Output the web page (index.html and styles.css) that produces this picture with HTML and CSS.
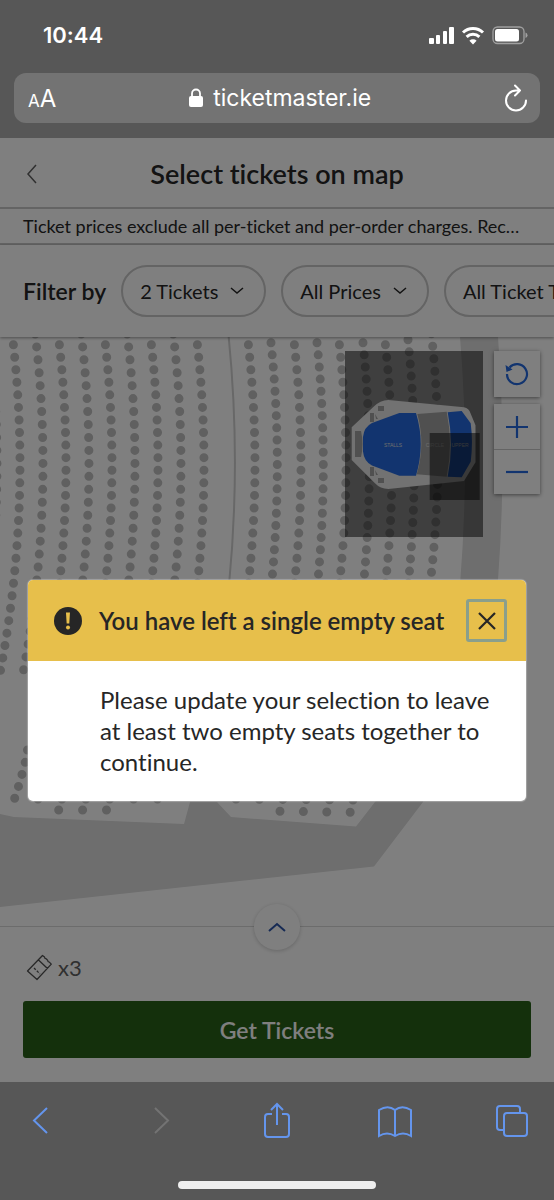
FILE: index.html
```html
<!DOCTYPE html>
<html lang="en">
<head>
    <meta charset="utf-8">
    <title>Select tickets on map</title>
    <meta name="viewport" content="width=device-width, initial-scale=1">
    <link rel="stylesheet" href="styles.css">
</head>
<body>
    <header class="browser-top">
        <div class="status-bar">
            <span class="clock">10:44</span>
            <svg class="status-icons" width="100" height="20" viewBox="428 25 100 20" aria-hidden="true">
                <g fill="#fff">
                    <rect x="429" y="38" width="5" height="6" rx="1"/>
                    <rect x="436" y="35" width="4" height="9" rx="1"/>
                    <rect x="443" y="31" width="4" height="13" rx="1"/>
                    <rect x="449" y="27" width="5" height="17" rx="1"/>
                    <path d="M473 44.500l-3.600-3.800a5.200 5.200 0 0 1 7.200 0z"/>
                    <rect x="495" y="29" width="24" height="12.500" rx="2.500"/>
                </g>
                <path d="M463 32.500a14.500 14.500 0 0 1 20 0M466.600 36.800a9.300 9.300 0 0 1 12.800 0" fill="none" stroke="#fff" stroke-width="3"/>
                <rect x="493" y="27" width="31" height="16.500" rx="4.500" fill="none" stroke="#a0a0a0" stroke-width="1.300"/>
                <path d="M525.500 32.500q2 .5 2 2.700t-2 2.700z" fill="#a0a0a0"/>
            </svg>
        </div>
        <div class="url-bar">
            <button class="plain text-size" aria-label="Text size"><small>A</small>A</button>
            <div class="url">
                <svg width="14" height="20" viewBox="0 0 14 20" aria-hidden="true">
                    <rect y="8" width="14" height="11" rx="2" fill="#fff"/>
                    <path d="M3 9V5.500a4 4 0 0 1 8 0V9" fill="none" stroke="#fff" stroke-width="1.800"/>
                </svg>
                <span>ticketmaster.ie</span>
            </div>
            <button class="plain" aria-label="Reload">
                <svg width="24" height="28" viewBox="0 0 24 28" fill="none" stroke="#fff" stroke-width="2" stroke-linecap="round" stroke-linejoin="round">
                    <path d="M16 6.500H12A10 10 0 1 0 22 16.500M11 1.500l5 5-5 5"/>
                </svg>
            </button>
        </div>
    </header>

    <main class="site">
        <div class="title-bar">
            <button class="plain back" aria-label="Back">
                <svg width="12" height="20" viewBox="0 0 12 20" fill="none" stroke="#606060" stroke-width="1.500"><path d="M10 1L2 10l8 9"/></svg>
            </button>
            <h1>Select tickets on map</h1>
        </div>
        <p class="notice">Ticket prices exclude all per-ticket and per-order charges. Recommended prices may vary.</p>
        <div class="filters">
            <span class="filters-label">Filter by</span>
            <button class="chip">2 Tickets
                <svg width="14" height="8" viewBox="0 0 14 8"><path d="M1 1l6 5 6-5"/></svg>
            </button>
            <button class="chip">All Prices
                <svg width="14" height="8" viewBox="0 0 14 8"><path d="M1 1l6 5 6-5"/></svg>
            </button>
            <button class="chip">All Ticket Types
                <svg width="14" height="8" viewBox="0 0 14 8"><path d="M1 1l6 5 6-5"/></svg>
            </button>
        </div>

        <div class="map">
            <svg class="seats" viewBox="0 337 554 589" preserveAspectRatio="xMinYMin slice" aria-hidden="true">
                <defs>
                    <!-- one seat row per path, the dots are round zero-length dashes -->
                    <path id="row-a" d="M13.400 344.700Q31.300 507.500 .5 670.500" stroke-dasharray="0 12.580"/>
                    <path id="row-b" d="M35.200 334Q55.300 502 23.400 671" stroke-dasharray="0 12.970"/>
                    <path id="row-c" d="M271 342.700Q283.600 464 271 590" stroke-dasharray="0 12.200"/>
                </defs>
                <path class="aisle" d="M460 337Q470 460 460 585L460 700 375 802 356 826.500 231 817 217 802 190 802 184 824 14 817 0 814V907L374 866.500 423 802 470 700 498 580Q507 460 498 337z"/>
                <path class="divider" d="M228.700 337Q241 461 229 585"/>
                <g class="rows">
                    <use href="#row-b" x="-46"/>
                    <use href="#row-a"/>
                    <use href="#row-b"/>
                    <use href="#row-a" x="46"/>
                    <use href="#row-b" x="46"/>
                    <use href="#row-a" x="92"/>
                    <use href="#row-b" x="92"/>
                    <use href="#row-a" x="138"/>
                    <use href="#row-b" x="138"/>
                    <use href="#row-a" x="184"/>
                    <use href="#row-a" x="235"/>
                    <use href="#row-c"/>
                    <use href="#row-a" x="281"/>
                    <use href="#row-c" x="46"/>
                    <use href="#row-a" x="326"/>
                    <use href="#row-c" x="92"/>
                    <use href="#row-a" x="372"/>
                    <use href="#row-c" x="137" y="-3"/>
                    <use href="#row-a" x="418" y="-11"/>
                    <path d="M14.700 798.300L18.500 786.300 22 774.300 25.300 762 27.500 750" stroke-dasharray="0 12.500"/>
                    <path d="M58.700 810h50" stroke-dasharray="0 23.900"/>
                    <path d="M38 799h122" stroke-dasharray="0 23.900"/>
                    <path d="M280 811.300l72 1" stroke-dasharray="0 23.400"/>
                    <path d="M236 799l119 1" stroke-dasharray="0 23.400"/>
                </g>
            </svg>

            <svg class="minimap" width="138" height="186" viewBox="0 0 138 186" role="img" aria-label="Venue overview">
                <rect width="138" height="186" fill="#000" fill-opacity=".5"/>
                <path d="M43.300 49L119 56.300q5 1 6.500 6l5 12v37L119 130l-75.700 8q-8 0-13.300-5.700L6.700 109V76.300L28.300 56q7-7 15-7z" fill="#e4e4e4"/>
                <path d="M54.300 62H71q9.500 31 0 62.700H54.300L27 114.500q-8-4-9-14V86q1-10 9-14z" fill="#2469de"/>
                <path d="M72.300 63l29.400-2.300q6.500 32 0 65L71.700 123.300q9-30 .6-60.300z" fill="#a0a0a0"/>
                <path d="M102.700 61.300l14-1.300 9 12.300q2.500 19 0 38.400l-9 15.600-14-.6q6.500-32 0-64.400z" fill="#2469de"/>
                <path d="M10 80h6q3 13 0 26h-6z" fill="#a0a0a0"/>
                <path d="M33 55h6v5h-6zM25 62h4v9h-4zM30 63l3 5h-2zM33 127h6v5h-6zM25 116h4v9h-4zM30 119l3 5h-2z" fill="#a0a0a0"/>
                <g fill="#dcdcdc" font-size="5" text-anchor="middle">
                    <text x="48" y="96">STALLS</text>
                    <text x="90" y="96">CIRCLE</text>
                    <text x="115" y="96">UPPER</text>
                </g>
                <rect x="84.700" y="82" width="50" height="67" fill="#000" fill-opacity=".5"/>
            </svg>

            <div class="map-controls">
                <button class="control" aria-label="Reset map">
                    <svg width="24" height="24" viewBox="0 0 24 24">
                        <path d="M2 12A10 10 0 1 0 4.500 5.500"/>
                        <path class="arrow-head" d="M.5 3l1 7 6-2.500z"/>
                    </svg>
                </button>
                <div class="zoom">
                    <button class="control" aria-label="Zoom in">
                        <svg width="24" height="24" viewBox="0 0 24 24"><path d="M12 1v22M1 12h22"/></svg>
                    </button>
                    <button class="control" aria-label="Zoom out">
                        <svg width="24" height="24" viewBox="0 0 24 24"><path d="M1 12h22"/></svg>
                    </button>
                </div>
            </div>
        </div>

        <div class="cart">
            <button class="expand" aria-label="Show selection">
                <svg width="20" height="12" viewBox="0 0 20 12"><path d="M2 10l8-7 8 7"/></svg>
            </button>
            <div class="count">
                <svg width="27" height="27" viewBox="0 0 27 27" fill="none" stroke="#505050" stroke-width="1.300" stroke-linejoin="round">
                    <path d="M1.500 17L16.500 1.500l2 1.500q0 1.700 1.700 1.800l1.500 1.600q0 1.500 1.600 1.700l2 2L11 25.500zM12.500 6l9 8.500"/>
                    <path d="M8 14l6 6" stroke-dasharray="2.500 1.500"/>
                </svg>
                <span>x3</span>
            </div>
            <button class="get-tickets">Get Tickets</button>
        </div>

        <div class="backdrop">
            <section class="alert" role="alertdialog" aria-labelledby="alert-title" aria-describedby="alert-text">
                <div class="alert-head">
                    <svg width="28" height="28" viewBox="0 0 28 28" aria-hidden="true">
                        <circle cx="14" cy="14" r="14" fill="#262626"/>
                        <path d="M12 5.500h4l-.7 11h-2.600z" fill="#e7bf4b"/>
                        <circle cx="14" cy="20.500" r="2" fill="#e7bf4b"/>
                    </svg>
                    <h2 id="alert-title">You have left a single empty seat</h2>
                    <button class="close" aria-label="Close">
                        <svg width="18" height="18" viewBox="0 0 18 18"><path d="M1 1l16 16M17 1L1 17" stroke="#262626" stroke-width="2.200"/></svg>
                    </button>
                </div>
                <p class="alert-text" id="alert-text">Please update your selection to leave at least two empty seats together to continue.</p>
            </section>
        </div>
    </main>

    <footer class="browser-bottom">
        <nav class="toolbar">
            <button class="plain" aria-label="Back">
                <svg width="34" height="36" viewBox="0 0 34 36"><path d="M22 6L9 18.500 22 31"/></svg>
            </button>
            <button class="plain off" aria-label="Forward" disabled>
                <svg width="34" height="36" viewBox="0 0 34 36"><path d="M12 6l13 12.500L12 31"/></svg>
            </button>
            <button class="plain" aria-label="Share">
                <svg width="34" height="36" viewBox="0 0 34 36"><path d="M12 12H8q-3 0-3 3v17q0 3 3 3h18q3 0 3-3V15q0-3-3-3h-4M17 23V2M11 8l6-6 6 6"/></svg>
            </button>
            <button class="plain" aria-label="Bookmarks">
                <svg width="34" height="36" viewBox="0 0 34 36"><path d="M17 8q-7-5.500-16 0v26q8-5 16 0 8-5 16 0V8q-9-5.500-16 0zv26"/></svg>
            </button>
            <button class="plain" aria-label="Tabs">
                <svg width="34" height="36" viewBox="0 0 34 36"><path d="M9 28H5q-3 0-3-3V7q0-3 3-3h17q3 0 3 3v4"/><rect x="9" y="11" width="23" height="23" rx="3"/></svg>
            </button>
        </nav>
        <div class="home-bar"></div>
    </footer>
</body>
</html>
```
FILE: styles.css
```css
* {
    box-sizing: border-box;
}

body {
    margin: 0;
    min-height: 100vh;
    display: flex;
    flex-direction: column;
    font-family: Lato, "Open Sans", sans-serif;
    font-variant-ligatures: none;
    color: #262626;
    background: #575757;
}

h1, h2, p {
    margin: 0;
}

button {
    font: inherit;
    color: inherit;
    padding: 0;
    border: none;
    background: none;
    cursor: pointer;
}

svg {
    display: block;
    flex-shrink: 0;
}

.plain {
    display: flex;
    align-items: center;
}

/* browser top */

.browser-top {
    height: 138px;
    padding: 23px 14px 0;
    color: #fff;
    font-family: Inter, sans-serif;
}

.status-bar {
    display: flex;
    justify-content: space-between;
    align-items: center;
    height: 24px;
    margin-bottom: 26px;
    padding: 0 12px 0 29px;
}

.clock {
    font-size: 22px;
    font-weight: 600;
}

.url-bar {
    display: flex;
    justify-content: space-between;
    align-items: center;
    height: 50px;
    padding: 0 12px 0 14px;
    border-radius: 12px;
    background: #737373;
    font-size: 23px;
}

.text-size {
    align-items: baseline;
    font-size: 24px;
}

.text-size small {
    font-size: 17px;
}

.url {
    display: flex;
    align-items: center;
    gap: 10px;
}

/* site */

.site {
    position: relative;
    flex: 1;
    display: flex;
    flex-direction: column;
    background: #fff;
    overflow: hidden;
}

.title-bar {
    display: grid;
    grid-template-columns: 36px 1fr 36px;
    align-items: center;
    height: 71px;
    padding: 2px 23px 0;
    border-bottom: 2px solid #c8c8c8;
}

h1 {
    font-size: 27px;
    line-height: 32px;
    font-weight: 600;
    text-align: center;
}

.back {
    padding-left: 3px;
}

.notice {
    height: 36px;
    padding: 0 30px 0 23px;
    border-bottom: 2px solid #c8c8c8;
    font-size: 18px;
    line-height: 34px;
    white-space: nowrap;
    overflow: hidden;
    text-overflow: ellipsis;
}

.filters {
    position: relative;
    z-index: 1;
    display: flex;
    align-items: center;
    gap: 15px;
    height: 92px;
    padding-left: 23px;
    background: #fff;
    box-shadow: 0 1px 3px rgba(0, 0, 0, 0.4);
    white-space: nowrap;
    overflow: hidden;
}

.filters-label {
    font-size: 23px;
    font-weight: 600;
}

.chip {
    display: flex;
    flex-shrink: 0;
    align-items: center;
    gap: 12px;
    height: 52px;
    padding: 0 20px 0 17px;
    border: 2px solid #c8c8c8;
    border-radius: 26px;
    font-size: 20px;
}

.chip path {
    fill: none;
    stroke: #262626;
    stroke-width: 1.5;
}

/* map */

.map {
    position: relative;
    flex: 1;
    overflow: hidden;
}

.seats {
    position: absolute;
    top: 0;
    left: 0;
    width: 100%;
    height: 100%;
}

.aisle {
    fill: #dcdcdc;
}

.divider {
    fill: none;
    stroke: #d0d0d0;
    stroke-width: 2;
}

.rows {
    fill: none;
    stroke: #c0c0c0;
    stroke-width: 9;
    stroke-linecap: round;
}

.minimap {
    position: absolute;
    top: 14px;
    right: 71px;
    font-family: "Liberation Sans", sans-serif;
}

.map-controls {
    position: absolute;
    top: 14px;
    right: 14px;
    display: flex;
    flex-direction: column;
    gap: 7px;
}

.control {
    display: flex;
    align-items: center;
    justify-content: center;
    width: 46px;
    height: 46px;
    background: #fff;
    box-shadow: 0 1px 4px rgba(0, 0, 0, 0.5);
}

.zoom {
    box-shadow: 0 1px 4px rgba(0, 0, 0, 0.5);
}

.zoom .control {
    height: 45px;
    box-shadow: none;
}

.zoom .control + .control {
    border-top: 1px solid #c8c8c8;
}

.control path {
    fill: none;
    stroke: #2469de;
    stroke-width: 2.2;
}

.control .arrow-head {
    fill: #2469de;
    stroke: none;
}

/* cart */

.cart {
    position: relative;
    padding: 26px 23px 24px;
    border-top: 1px solid #d8d8d8;
}

.expand {
    position: absolute;
    top: -23px;
    left: 50%;
    display: flex;
    align-items: center;
    justify-content: center;
    width: 46px;
    height: 46px;
    margin-left: -23px;
    border-radius: 50%;
    background: #fff;
    box-shadow: 0 1px 4px rgba(0, 0, 0, 0.2);
}

.expand path {
    fill: none;
    stroke: #2c54a8;
    stroke-width: 2;
}

.count {
    display: flex;
    align-items: center;
    gap: 5px;
    height: 28px;
    margin-bottom: 20px;
    padding-left: 3px;
    color: #606060;
    font-size: 22px;
}

.get-tickets {
    display: block;
    width: 100%;
    height: 57px;
    border-radius: 3px;
    background: #286018;
    color: #fff;
    font-size: 23px;
    font-weight: 600;
}

/* alert */

.backdrop {
    position: absolute;
    inset: 0;
    z-index: 2;
    display: flex;
    align-items: center;
    justify-content: center;
    padding: 160px 28px 0;
    background: rgba(0, 0, 0, 0.5);
}

.alert {
    width: 100%;
    border-radius: 5px;
    background: #fff;
    box-shadow: 0 0 1px 1px rgba(200, 200, 200, 0.5);
    overflow: hidden;
}

.alert-head {
    display: flex;
    align-items: center;
    gap: 17px;
    height: 81px;
    padding: 1px 19px 0 26px;
    background: #e7bf4b;
}

h2 {
    flex: 1;
    font-size: 24px;
    line-height: 28px;
    font-weight: 600;
    white-space: nowrap;
}

.close {
    display: flex;
    align-items: center;
    justify-content: center;
    width: 41px;
    height: 43px;
    border: 3px solid #8a9f8c;
    border-radius: 3px;
}

.alert-text {
    padding: 23px 30px 24px 72px;
    font-size: 24px;
    line-height: 31px;
}

/* browser bottom */

.browser-bottom {
    height: 118px;
    padding: 20px 25px 0;
}

.toolbar {
    display: flex;
    justify-content: space-between;
}

.toolbar path,
.toolbar rect {
    fill: none;
    stroke: #6495ed;
    stroke-width: 2;
}

.toolbar .off path {
    stroke: #737373;
}

.home-bar {
    width: 198px;
    height: 8px;
    margin: 43px auto 0;
    border-radius: 4px;
    background: #efefef;
}
```
